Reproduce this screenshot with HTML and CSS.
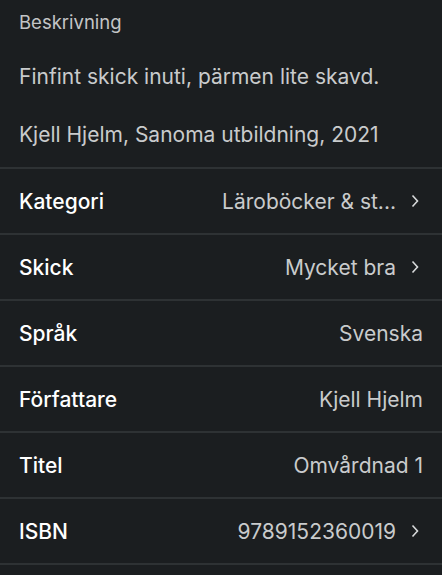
FILE: index.html
```html
<!DOCTYPE html>
<html lang="sv">
<head>
  <meta charset="UTF-8" />
  <meta name="viewport" content="width=device-width, initial-scale=1.0"/>
  <title>Annons</title>
  <link rel="stylesheet" href="styles.css">
</head>
<body>
  <div class="desc">
    <h4>Beskrivning</h4>
    <p>Finfint skick inuti, pärmen lite skavd.</p>
    <p class="last">Kjell Hjelm, Sanoma utbildning, 2021</p>
  </div>

  <ul class="details">
    <li>
      <span class="key">Kategori</span>
      <span class="val">Läroböcker &amp; st...</span>
      <svg class="chev" viewBox="0 0 8 14"><path d="M1.5 1.5 6.5 7l-5 5.5"/></svg>
    </li>
    <li>
      <span class="key">Skick</span>
      <span class="val">Mycket bra</span>
      <svg class="chev" viewBox="0 0 8 14"><path d="M1.5 1.5 6.5 7l-5 5.5"/></svg>
    </li>
    <li>
      <span class="key">Språk</span>
      <span class="val">Svenska</span>
    </li>
    <li>
      <span class="key">Författare</span>
      <span class="val">Kjell Hjelm</span>
    </li>
    <li>
      <span class="key">Titel</span>
      <span class="val">Omvårdnad 1</span>
    </li>
    <li>
      <span class="key">ISBN</span>
      <span class="val">9789152360019</span>
      <svg class="chev" viewBox="0 0 8 14"><path d="M1.5 1.5 6.5 7l-5 5.5"/></svg>
    </li>
  </ul>
</body>
</html>
```

FILE: styles.css
```css
body {
  margin: 0;
  background: #1b1e20;
  font-family: Inter, "Noto Sans", sans-serif;
  color: #fff;
}
.desc {
  padding: 10px 19px 20px;
}
.desc h4 {
  margin: 0;
  font-size: 18.5px;
  line-height: 24px;
  font-weight: 400;
  color: #c3c5c6;
}
.desc p {
  margin: 31px 0 0;
  font-size: 21px;
  line-height: 24px;
  color: #c9cbcc;
}
.desc p.last {
  margin-top: 34px;
}
.details {
  list-style: none;
  margin: 0;
  padding: 0;
}
.details li {
  display: flex;
  align-items: center;
  height: 64px;
  padding: 0 19px;
  border-top: 2px solid #2e3234;
}
.details li:last-child {
  border-bottom: 2px solid #2e3234;
}
.key {
  font-size: 21px;
  font-weight: 500;
  color: #fff;
}
.val {
  margin-left: auto;
  font-size: 21px;
  color: #c9cbcc;
}
.chev {
  width: 8px;
  height: 14px;
  margin: 0 4px 0 15px;
  fill: none;
  stroke: #d8dadb;
  stroke-width: 1.6;
}
```
